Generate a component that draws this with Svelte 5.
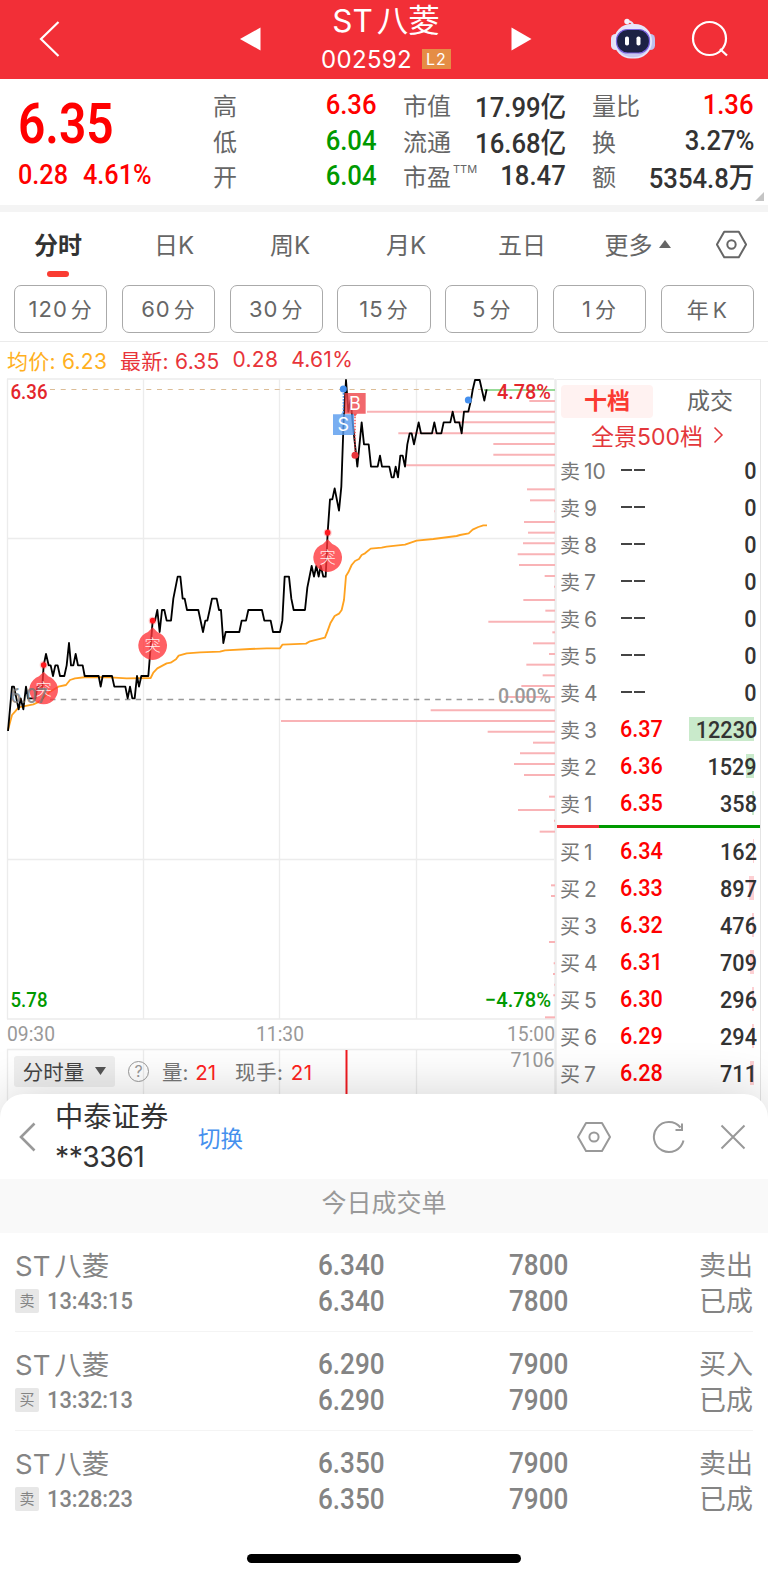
<script lang="ts">
	type Level = { name: string; price: string; volume: string; bar: number };

	const quoteRows = [
		[['高', '6.36', 'up'], ['市值', '17.99亿', ''], ['量比', '1.36', 'up']],
		[['低', '6.04', 'down'], ['流通', '16.68亿', ''], ['换', '3.27%', '']],
		[['开', '6.04', 'down'], ['市盈', '18.47', ''], ['额', '5354.8万', '']]
	];

	const tabs = ['分时', '日K', '周K', '月K', '五日'];
	const periods = ['120分', '60分', '30分', '15分', '5分', '1分', '年K'];

	const sells: Level[] = [
		...[10, 9, 8, 7, 6, 5, 4].map((n) => ({ name: '卖' + n, price: '--', volume: '0', bar: 0 })),
		{ name: '卖3', price: '6.37', volume: '12230', bar: 65 },
		{ name: '卖2', price: '6.36', volume: '1529', bar: 8 },
		{ name: '卖1', price: '6.35', volume: '358', bar: 2 }
	];
	const buys: Level[] = [
		{ name: '买1', price: '6.34', volume: '162', bar: 1 },
		{ name: '买2', price: '6.33', volume: '897', bar: 5 },
		{ name: '买3', price: '6.32', volume: '476', bar: 2 },
		{ name: '买4', price: '6.31', volume: '709', bar: 4 },
		{ name: '买5', price: '6.30', volume: '296', bar: 2 },
		{ name: '买6', price: '6.29', volume: '294', bar: 2 },
		{ name: '买7', price: '6.28', volume: '711', bar: 4 }
	];

	const orders = [
		{ side: '卖', time: '13:43:15', price: '6.340', amount: '7800', action: '卖出' },
		{ side: '买', time: '13:32:13', price: '6.290', amount: '7900', action: '买入' },
		{ side: '卖', time: '13:28:23', price: '6.350', amount: '7900', action: '卖出' }
	];

	// the curves are kept in thirds of a pixel
	const priceLine =
		'24,1083 36,950 42,950 56,1018 62,985 70,1018 78,950 84,985 106,985 113,950 127,950 131,886 138,852 146,886 152,886 159,918 166,886 173,886 180,918 193,918 200,886 207,819 213,886 220,886 227,852 234,886 248,886 254,918 296,918 302,950 308,918 336,918 343,950 376,950 383,985 390,950 397,985 404,985 411,918 417,950 424,918 445,918 452,830 458,752 465,752 472,720 479,786 486,720 493,720 500,752 513,752 520,686 533,620 541,620 548,686 554,686 561,720 595,720 609,786 616,752 622,752 629,720 636,686 650,686 657,720 663,720 670,819 677,786 718,786 725,752 738,752 745,720 786,720 793,752 812,752 819,786 840,786 847,752 854,620 867,620 874,686 881,720 915,720 922,653 935,588 942,620 949,588 956,620 962,588 970,620 977,620 983,488 990,388 997,388 1004,355 1017,422 1024,350 1031,150 1038,30 1045,125 1052,90 1058,157 1072,290 1085,157 1092,223 1106,223 1113,290 1133,290 1140,257 1146,290 1168,290 1175,322 1181,322 1187,290 1194,322 1201,257 1208,257 1215,290 1222,223 1229,190 1235,190 1242,223 1256,157 1263,190 1296,190 1303,157 1310,190 1324,190 1331,157 1351,157 1358,125 1365,157 1378,157 1385,190 1392,125 1405,125 1413,90 1418,60 1425,30 1439,30 1453,92 1460,58';
	const averageLine =
		'24,1080 36,1035 45,1025 56,1012 100,1003 118,995 150,965 175,950 198,945 210,930 225,925 260,921 330,922 380,925 452,924 460,908 472,895 500,880 512,878 528,868 536,857 560,850 600,847 660,845 675,841 750,837 800,835 840,835 847,824 918,821 930,814 975,803 982,785 991,760 1004,738 1017,731 1025,720 1032,690 1038,618 1045,607 1055,585 1065,573 1077,567 1085,555 1095,550 1112,536 1145,533 1160,530 1215,524 1250,512 1300,507 1370,498 1380,495 1406,490 1418,479 1435,471 1450,466 1461,466';

	// [y, length]
	const chips = [
		[93, 77], [125, 564], [157, 300], [190, 470], [222, 185], [254, 185], [286, 450], [358, 84],
		[391, 75], [424, 2], [456, 93], [488, 81], [520, 96], [553, 112], [585, 108], [618, 31],
		[650, 3], [690, 95], [722, 29], [755, 200], [787, 8], [820, 66], [852, 18], [884, 86],
		[916, 37], [948, 101], [981, 152], [1021, 373], [1053, 822], [1085, 202], [1118, 66],
		[1150, 105], [1182, 123], [1215, 93], [1280, 18], [1320, 111], [1352, 3], [1385, 46],
		[1546, 12], [1578, 12], [1716, 18], [1780, 4], [1812, 6], [1844, 2], [1876, 5], [1942, 30]
	];

	const breakouts = [[131, 885], [458, 752], [983, 488]];

	// [text, x, y, width, colour]
	const axisLabels: [string, number, number, number, string][] = [
		['6.36', 10.5, 399, 37, '#e3262c'],
		['4.78%', 497, 399, 54, '#e3262c'],
		['0.00%', 498, 703, 53, '#999'],
		['5.78', 10.5, 1006.5, 37, '#090'],
		['−4.78%', 485, 1006.5, 66, '#090']
	];
	const timeLabels: [string, number, number, number][] = [
		['09:30', 7, 1041, 48],
		['11:30', 256, 1041, 48],
		['15:00', 507, 1041, 48],
		['7106', 510.5, 1067, 44]
	];

	let activeTab = $state('分时');
</script>

{#snippet settingIcon(size: number, stroke: number)}
	<svg width={size} height={size} viewBox="0 0 34 34" fill="none" stroke="currentColor" stroke-width={stroke}>
		<path d="M9 3h16l8 14-8 14H9L1 17z" stroke-linejoin="round" />
		<circle cx="17" cy="17" r="4.6" />
	</svg>
{/snippet}

{#snippet levelRow(level: Level, side: string)}
	<div class="level">
		<span class="level-name">{level.name[0]}<i>{level.name.slice(1)}</i></span>
		{#if level.price === '--'}
			<span class="dashes"><b></b><b></b></span>
		{:else}
			<span class="level-price num">{level.price}</span>
		{/if}
		<span class="level-volume">
			{#if level.bar}<span class="level-bar {side}" style="width: {level.bar}px"></span>{/if}
			<em class="num right">{level.volume}</em>
		</span>
	</div>
{/snippet}

<main class="page">
	<header class="topbar">
		<svg class="back" width="22" height="38" viewBox="0 0 22 38"><path d="M19.500 2L2 19l17.500 17" fill="none" stroke="#fff" stroke-width="2.200" /></svg>
		<svg class="prev" width="21" height="24" viewBox="0 0 21 24"><path d="M0 12L20.500 .5v23z" fill="#fff" /></svg>
		<div class="title">
			<h1>ST <span>八菱</span></h1>
			<div class="code"><span>002592</span><b>L2</b></div>
		</div>
		<svg class="next" width="21" height="24" viewBox="0 0 21 24"><path d="M.5.500L20.500 12 .5 23.500z" fill="#fff" /></svg>
		<svg class="robot" width="44" height="42" viewBox="0 0 44 42">
			<path d="M22 8c0-3-1-4.500-5-4.500" fill="none" stroke="#e4e2f6" stroke-width="2" />
			<circle cx="16" cy="3.500" r="2.700" fill="#f4f2fd" />
			<rect x="0" y="16" width="9" height="16" rx="4.500" fill="#e3e2f8" />
			<rect x="35" y="16" width="9" height="16" rx="4.500" fill="#bcc0ee" />
			<rect x="3" y="6" width="38" height="34.500" rx="17" fill="#e6e5fa" />
			<path d="M7 31c5 11 25 11 30 0-6 6-24 6-30 0z" fill="#c9c9ef" />
			<rect x="5.500" y="11.500" width="33" height="23.500" rx="11" fill="#1d2244" stroke="#7a63e0" stroke-width="1.200" />
			<rect x="14" y="18.500" width="4" height="9" rx="1.800" fill="#fff" />
			<rect x="25.500" y="18.500" width="4" height="9" rx="1.800" fill="#fff" />
		</svg>
		<svg class="search" width="38" height="38" viewBox="0 0 38 38" fill="none" stroke="#fff" stroke-width="2.200">
			<circle cx="18.500" cy="18.500" r="16.500" />
			<path d="M29 29l7 6.500" />
		</svg>
	</header>

	<section class="quote">
		<div class="last">
			<strong class="num">6.35</strong>
			<div class="change"><span class="num">0.28</span><span class="num">4.61%</span></div>
		</div>
		<div class="stats">
			{#each quoteRows as row}
				{#each row as [label, value, tone]}
					<div class="stat">
						<span class="stat-label">{label}{#if label === '市盈'}<sup>TTM</sup>{/if}</span>
						<span class="stat-value num right {tone}">{value}</span>
					</div>
				{/each}
			{/each}
		</div>
		<svg class="corner" width="9" height="9"><path d="M9 0v9H0z" fill="#c4c4c4" /></svg>
	</section>

	<nav class="tabs">
		{#each tabs as tab}
			<button class:active={tab === activeTab} onclick={() => (activeTab = tab)}>{tab}</button>
		{/each}
		<button class="more">更多<svg width="12" height="8"><path d="M6 0l6 8H0z" fill="#666" /></svg></button>
		<span class="settings">{@render settingIcon(31, 2.2)}</span>
	</nav>

	<div class="periods">
		{#each periods as period}
			<button>{period.replace(/[分K]/, '')}<span>{period.slice(-1)}</span></button>
		{/each}
	</div>

	<div class="legend">
		<span class="avg">均价: 6.23</span>
		<span>最新: 6.35</span>
		<span>0.28</span>
		<span>4.61%</span>
	</div>

	<section class="market">
		<div class="chart">
			<svg class="plot" width="557" height="744" viewBox="0 376 557 744">
				<g fill="none" stroke="#ececec" stroke-width="1.300">
					<path d="M7 379H554M7 538.500H554M7 859.500H554M7 1019H554M7 1049.500H554" />
					<path d="M7.500 379V1019M143.500 379V1019M279.500 379V1019M416.500 379V1019" />
					<path d="M7.500 1049V1120M143.500 1049V1120M279.500 1049V1120M416.500 1049V1120" />
					<path d="M555.500 379V1120" stroke-width="2.500" />
				</g>
				<path d="M50 389.500H485" stroke="#dcbd97" stroke-width="1.200" stroke-dasharray="5 5.700" />
				<path d="M50 699.500H496" stroke="#999" stroke-width="1.500" stroke-dasharray="5.500 5.200" />

				<g transform="translate(0 370) scale(.33333)" fill="none">
					<g stroke="#f9b3b6" stroke-width="6">
						{#each chips as [y, len]}
							<path d="M{1665 - len} {y}H1665" />
						{/each}
					</g>
					<path d="M1452 60H1665" stroke="#74cf74" stroke-width="5" />
					<polyline points={averageLine} stroke="#ffa21f" stroke-width="5.500" stroke-linejoin="round" />
					<polyline points={priceLine} stroke="#000" stroke-width="5.500" stroke-linejoin="round" />

					{#each breakouts as [x, y]}
						<path d="M{x} {y + 20}l14 14a43 43 0 1 1-28 0z" fill="#ff3338" opacity=".78" />
						<circle cx={x} cy={y} r="12" fill="#ff3338" opacity=".25" />
						<circle cx={x} cy={y} r="8.500" fill="#ff1a20" />
						<text x={x} y={y + 91} text-anchor="middle" font-size="49" font-weight="300" fill="#fff" fill-opacity=".9">突</text>
					{/each}

					<path d="M1030 60V133" stroke="#4d94ee" stroke-width="4" stroke-dasharray="5 4" />
					<path d="M1065 131V256" stroke="#ee3a40" stroke-width="4" stroke-dasharray="5 4" />
					<path d="M1034 69H1097V131H1072L1065 140L1058 131H1034z" fill="#ee4249" opacity=".8" />
					<path d="M999 133H1023L1030 123V133H1062V195H999z" fill="#5a9cee" opacity=".82" />
					<text x="1065" y="119" text-anchor="middle" font-size="54" fill="#fff">B</text>
					<text x="1030" y="184" text-anchor="middle" font-size="54" fill="#fff">S</text>
					<circle cx="1030" cy="57" r="10.500" fill="#4590ee" />
					<circle cx="1065" cy="256" r="10.500" fill="#e8353c" />
					<circle cx="1405" cy="90" r="10.500" fill="#4590ee" />
				</g>

				<g class="axis">
					<text x="10.500" y="703" textLength="37" lengthAdjust="spacingAndGlyphs" fill="#777" opacity=".8">6.07</text>
					{#each axisLabels as [label, x, y, width, color]}
						<text {x} {y} textLength={width} lengthAdjust="spacingAndGlyphs" fill={color}>{label}</text>
					{/each}
					<g class="time" fill="#999">
						{#each timeLabels as [label, x, y, width]}
							<text {x} {y} textLength={width} lengthAdjust="spacingAndGlyphs">{label}</text>
						{/each}
					</g>
				</g>
				<path d="M346.500 1050V1096" stroke="#f01a20" stroke-width="2" />
			</svg>
			<div class="indicator">
				<span class="picker">分时量<svg width="11" height="8"><path d="M0 0h11L5.500 8z" fill="#555" /></svg></span>
				<span class="help">?</span>
				<span>量: <b>21</b></span>
				<span class="hand">现手: <b>21</b></span>
			</div>
		</div>

		<aside class="book">
			<div class="book-tabs"><span class="on">十档</span><span>成交</span></div>
			<div class="panorama">全景500档<svg width="11" height="18" viewBox="0 0 11 18"><path d="M1.500 1.500L9 9l-7.500 7.500" fill="none" stroke="#e3373b" stroke-width="1.500" /></svg></div>
			{#each sells as level}
				{@render levelRow(level, 'sell')}
			{/each}
			<div class="ratio"></div>
			{#each buys as level}
				{@render levelRow(level, 'buy')}
			{/each}
		</aside>
	</section>

	<section class="sheet">
		<div class="account">
			<svg class="account-back" width="17" height="30" viewBox="0 0 17 30"><path d="M15.500 1.500L2 15l13.500 13.500" fill="none" stroke="#999" stroke-width="2.600" /></svg>
			<div class="broker"><div>中泰证券</div><div>**3361</div></div>
			<span class="switch">切换</span>
			<div class="tools">
				{@render settingIcon(34, 2)}
				<svg class="refresh" width="34" height="34" viewBox="0 0 34 34" fill="none" stroke="#999" stroke-width="2">
					<path d="M31.500 20.500A15 15 0 1 1 28.500 7.500" />
					<path d="M30 3.500v6.500h-6.500" />
				</svg>
				<svg class="close" width="26" height="26" viewBox="0 0 26 26"><path d="M1.500 1.500l23 23M24.500 1.500l-23 23" stroke="#999" stroke-width="2" /></svg>
			</div>
		</div>
		<h2>今日成交单</h2>
		<div class="orders">
			{#each orders as order}
				<div class="order">
					<div>
						<div class="stock">ST <span>八菱</span></div>
						<div class="when"><b>{order.side}</b><span class="num">{order.time}</span></div>
					</div>
					<div class="figure"><span class="num">{order.price}</span><span class="num">{order.price}</span></div>
					<div class="figure"><span class="num">{order.amount}</span><span class="num">{order.amount}</span></div>
					<div class="action">{order.action}<br />已成</div>
				</div>
			{/each}
		</div>
		<div class="home"></div>
	</section>
</main>

<style>
	:global(body) {
		margin: 0;
		background: #fff;
	}

	.page {
		width: 768px;
		height: 1578px;
		overflow: hidden;
		background: #fff;
		color: #666;
		font-family: Inter, "Noto Sans CJK SC", sans-serif;
	}

	.page svg {
		display: block;
		flex: none;
	}

	button {
		border: 0;
		padding: 0;
		background: none;
		color: inherit;
		font: inherit;
	}

	/* narrow figures */
	.num {
		display: inline-block;
		font-family: Roboto, "Noto Sans CJK SC", sans-serif;
		font-weight: 500;
		transform: scaleX(0.9);
		transform-origin: left center;
	}

	.right {
		transform-origin: right center;
	}

	.up {
		color: #f00;
	}

	.down {
		color: #090;
	}

	/* top bar */
	.topbar {
		display: flex;
		align-items: center;
		height: 79px;
		padding: 0 0 2px 39px;
		box-sizing: border-box;
		background: #f22f37;
		color: #fff;
	}

	.prev {
		margin-left: 179px;
	}

	.title {
		width: 250px;
		text-align: center;
	}

	h1 {
		margin: 0;
		font-size: 31.500px;
		font-weight: 400;
		line-height: 38px;
		white-space: nowrap;
	}

	h1 span {
		margin-left: -5px;
	}

	.code {
		display: flex;
		align-items: center;
		justify-content: center;
		height: 32px;
		margin-top: 3px;
		gap: 10px;
		font-size: 24px;
		letter-spacing: 0.3px;
	}

	.code b {
		width: 29px;
		background: #e58d45;
		font-size: 16px;
		font-weight: 400;
		line-height: 20px;
		letter-spacing: 1px;
	}

	.robot {
		margin-left: 79px;
	}

	.search {
		margin-left: 36px;
	}

	/* quote */
	.quote {
		display: flex;
		position: relative;
		height: 126px;
		border-bottom: 7px solid #f4f4f4;
	}

	.last {
		width: 213px;
		padding: 13px 0 0 18px;
		box-sizing: border-box;
		color: #f00;
	}

	.last strong {
		display: block;
		font-size: 55px;
		font-weight: 600;
		line-height: 64px;
		transform: scaleX(0.87);
	}

	.change {
		display: flex;
		gap: 9px;
		font-size: 28px;
		line-height: 38px;
	}

	.stats {
		display: grid;
		grid-template-columns: 164px 163px 162px;
		grid-auto-rows: 35.500px;
		column-gap: 26px;
		padding-top: 8px;
	}

	.stat {
		display: flex;
		align-items: center;
		justify-content: space-between;
		white-space: nowrap;
	}

	.stat-label {
		font-size: 24px;
	}

	.stat-label sup {
		font-size: 11px;
		vertical-align: 13px;
		line-height: 0;
		margin-left: 2px;
	}

	.stat-value {
		margin-left: -30px;
		font-size: 28.500px;
	}

	.stat-value:not(.up):not(.down) {
		color: #333;
	}

	.corner {
		position: absolute;
		right: 4px;
		bottom: 4px;
	}

	/* tabs */
	.tabs {
		display: grid;
		grid-template-columns: 116px 116px 116px 116px 116px 115px 1fr;
		height: 65px;
		font-size: 24px;
	}

	.tabs button {
		display: flex;
		position: relative;
		align-items: center;
		justify-content: center;
		padding-bottom: 2px;
	}

	.tabs .active {
		color: #333;
		font-weight: 600;
	}

	.tabs .active::after {
		content: "";
		position: absolute;
		left: 47px;
		bottom: 0;
		width: 22px;
		height: 6px;
		border-radius: 3px;
		background: #fa3c32;
	}

	.more svg {
		margin-left: 6px;
	}

	.settings {
		display: flex;
		align-items: center;
		justify-content: center;
		padding-bottom: 1px;
	}

	.periods {
		display: grid;
		grid-template-columns: repeat(7, 1fr);
		gap: 14.500px;
		height: 48px;
		padding: 8px 14px;
	}

	.periods button {
		border: 1px solid #aaa;
		border-radius: 7px;
		padding-bottom: 2px;
		font-size: 22px;
		letter-spacing: 1px;
	}

	.periods span {
		margin-left: 3px;
		font-size: 21px;
	}

	.legend {
		display: flex;
		align-items: center;
		gap: 13px;
		height: 34px;
		padding: 1px 0 0 7px;
		box-sizing: border-box;
		height: 35px;
		border-top: 1px solid #ebebeb;
		color: #e8343a;
		font-size: 21px;
		letter-spacing: 0.25px;
	}

	.avg {
		color: #ffb01e;
	}

	/* chart and order book */
	.market {
		display: flex;
		height: 744px;
	}

	.chart {
		position: relative;
		width: 557px;
	}

	.axis {
		font: 500 21px Roboto, sans-serif;
	}

	.time {
		font-weight: 400;
	}

	.indicator {
		display: flex;
		position: absolute;
		left: 14px;
		top: 679px;
		align-items: center;
		height: 32px;
		color: #777;
		font-size: 20.500px;
		white-space: nowrap;
	}

	.indicator b {
		margin-left: 1px;
		color: #f22;
		font-weight: 400;
	}

	.picker {
		display: flex;
		align-items: center;
		justify-content: center;
		width: 101px;
		height: 31px;
		gap: 11px;
		border-radius: 3px;
		background: #efefef;
		color: #444;
	}

	.help {
		width: 19px;
		height: 19px;
		margin: 0 13px;
		border: 1.500px solid #999;
		border-radius: 50%;
		color: #999;
		font-size: 16px;
		line-height: 19px;
		text-align: center;
	}

	.hand {
		margin-left: 19px;
		letter-spacing: 0.5px;
	}

	.book {
		width: 204px;
		margin-top: 3px;
		box-sizing: border-box;
		border-top: 1px solid #ececec;
		border-right: 1px solid #e4e4e4;
	}

	.book-tabs {
		display: flex;
		align-items: center;
		height: 34px;
		margin: 4px 0 0 4px;
		font-size: 23px;
		text-align: center;
	}

	.book-tabs span {
		flex: none;
		width: 114px;
		line-height: 33px;
	}

	.book-tabs .on {
		width: 92px;
		border-radius: 4px;
		background: #fff2f1;
		color: #fb3a32;
		font-weight: 600;
	}

	.panorama {
		display: flex;
		align-items: center;
		height: 34px;
		padding-left: 34px;
		gap: 10px;
		color: #e3373b;
		font-size: 23px;
	}

	.level {
		display: grid;
		position: relative;
		grid-template-columns: 60px 1fr 1fr;
		align-items: center;
		height: 37px;
		padding: 0 3px 1px;
		box-sizing: border-box;
	}

	.level-name {
		color: #777;
		font-size: 20px;
	}

	.level-name i {
		margin-left: 4px;
		font-size: 21px;
		font-style: normal;
	}

	.dashes {
		display: flex;
		gap: 2px;
		padding-left: 1px;
	}

	.dashes b {
		width: 11px;
		height: 2px;
		background: #444;
	}

	.level-price {
		color: #f00;
		font-size: 24px;
	}

	.level-volume {
		color: #333;
		font-size: 24px;
		text-align: right;
	}

	.level-volume em {
		position: relative;
		font-style: normal;
	}

	.level-bar {
		position: absolute;
		right: 6px;
		top: 6px;
		height: 24px;
	}

	.sell {
		background: #c9eacb;
	}

	.buy {
		background: #fdd0d3;
	}

	.ratio {
		height: 3px;
		margin: 3px 0 5px;
		background: linear-gradient(90deg, #f23037 42px, #090 42px);
	}

	/* trade sheet */
	.sheet {
		position: relative;
		height: 484px;
		margin-top: -26px;
		border-radius: 24px 24px 0 0;
		background: #fff;
		box-shadow: 0 -4px 50px rgba(0, 0, 0, 0.16);
	}

	.account {
		display: flex;
		align-items: center;
		height: 85px;
		padding: 1px 0 0 19px;
		box-sizing: border-box;
	}

	.broker {
		width: 143px;
		margin-left: 19px;
		color: #333;
		font-size: 28.300px;
		line-height: 40px;
	}

	.broker div + div {
		letter-spacing: -0.5px;
	}

	.switch {
		color: #4590ee;
		font-size: 22.500px;
	}

	.tools {
		display: flex;
		align-items: center;
		margin-left: 334px;
		color: #999;
	}

	.refresh {
		margin-left: 41px;
	}

	.close {
		margin-left: 34px;
	}

	h2 {
		height: 54px;
		margin: 0;
		background: #f9f9f9;
		color: #999;
		font-size: 25px;
		font-weight: 400;
		line-height: 48px;
		text-align: center;
	}

	.orders {
		padding: 0 15px;
	}

	.order {
		display: grid;
		grid-template-columns: 303px 191px 90px 1fr;
		height: 98px;
		padding-top: 14px;
		box-sizing: border-box;
		color: #848484;
		line-height: 36px;
	}

	.order + .order {
		border-top: 1px solid #f4f4f4;
		height: 99px;
	}

	.stock {
		padding-top: 1px;
		font-size: 27.500px;
	}

	.stock span {
		margin-left: -4px;
	}

	.when {
		display: flex;
		align-items: center;
		height: 34px;
		gap: 8px;
		font-size: 24.500px;
	}

	.when .num {
		transform: scaleX(0.89);
	}

	.when b {
		width: 24px;
		border-radius: 2px;
		background: #e7e7e7;
		font-size: 15px;
		font-weight: 400;
		line-height: 24px;
		text-align: center;
	}

	.figure {
		display: flex;
		flex-direction: column;
		font-size: 29px;
	}

	.action {
		padding-top: 1px;
		font-size: 27px;
		text-align: right;
	}

	.home {
		position: absolute;
		left: 247px;
		bottom: 15px;
		width: 274px;
		height: 9px;
		border-radius: 5px;
		background: #000;
	}
</style>
